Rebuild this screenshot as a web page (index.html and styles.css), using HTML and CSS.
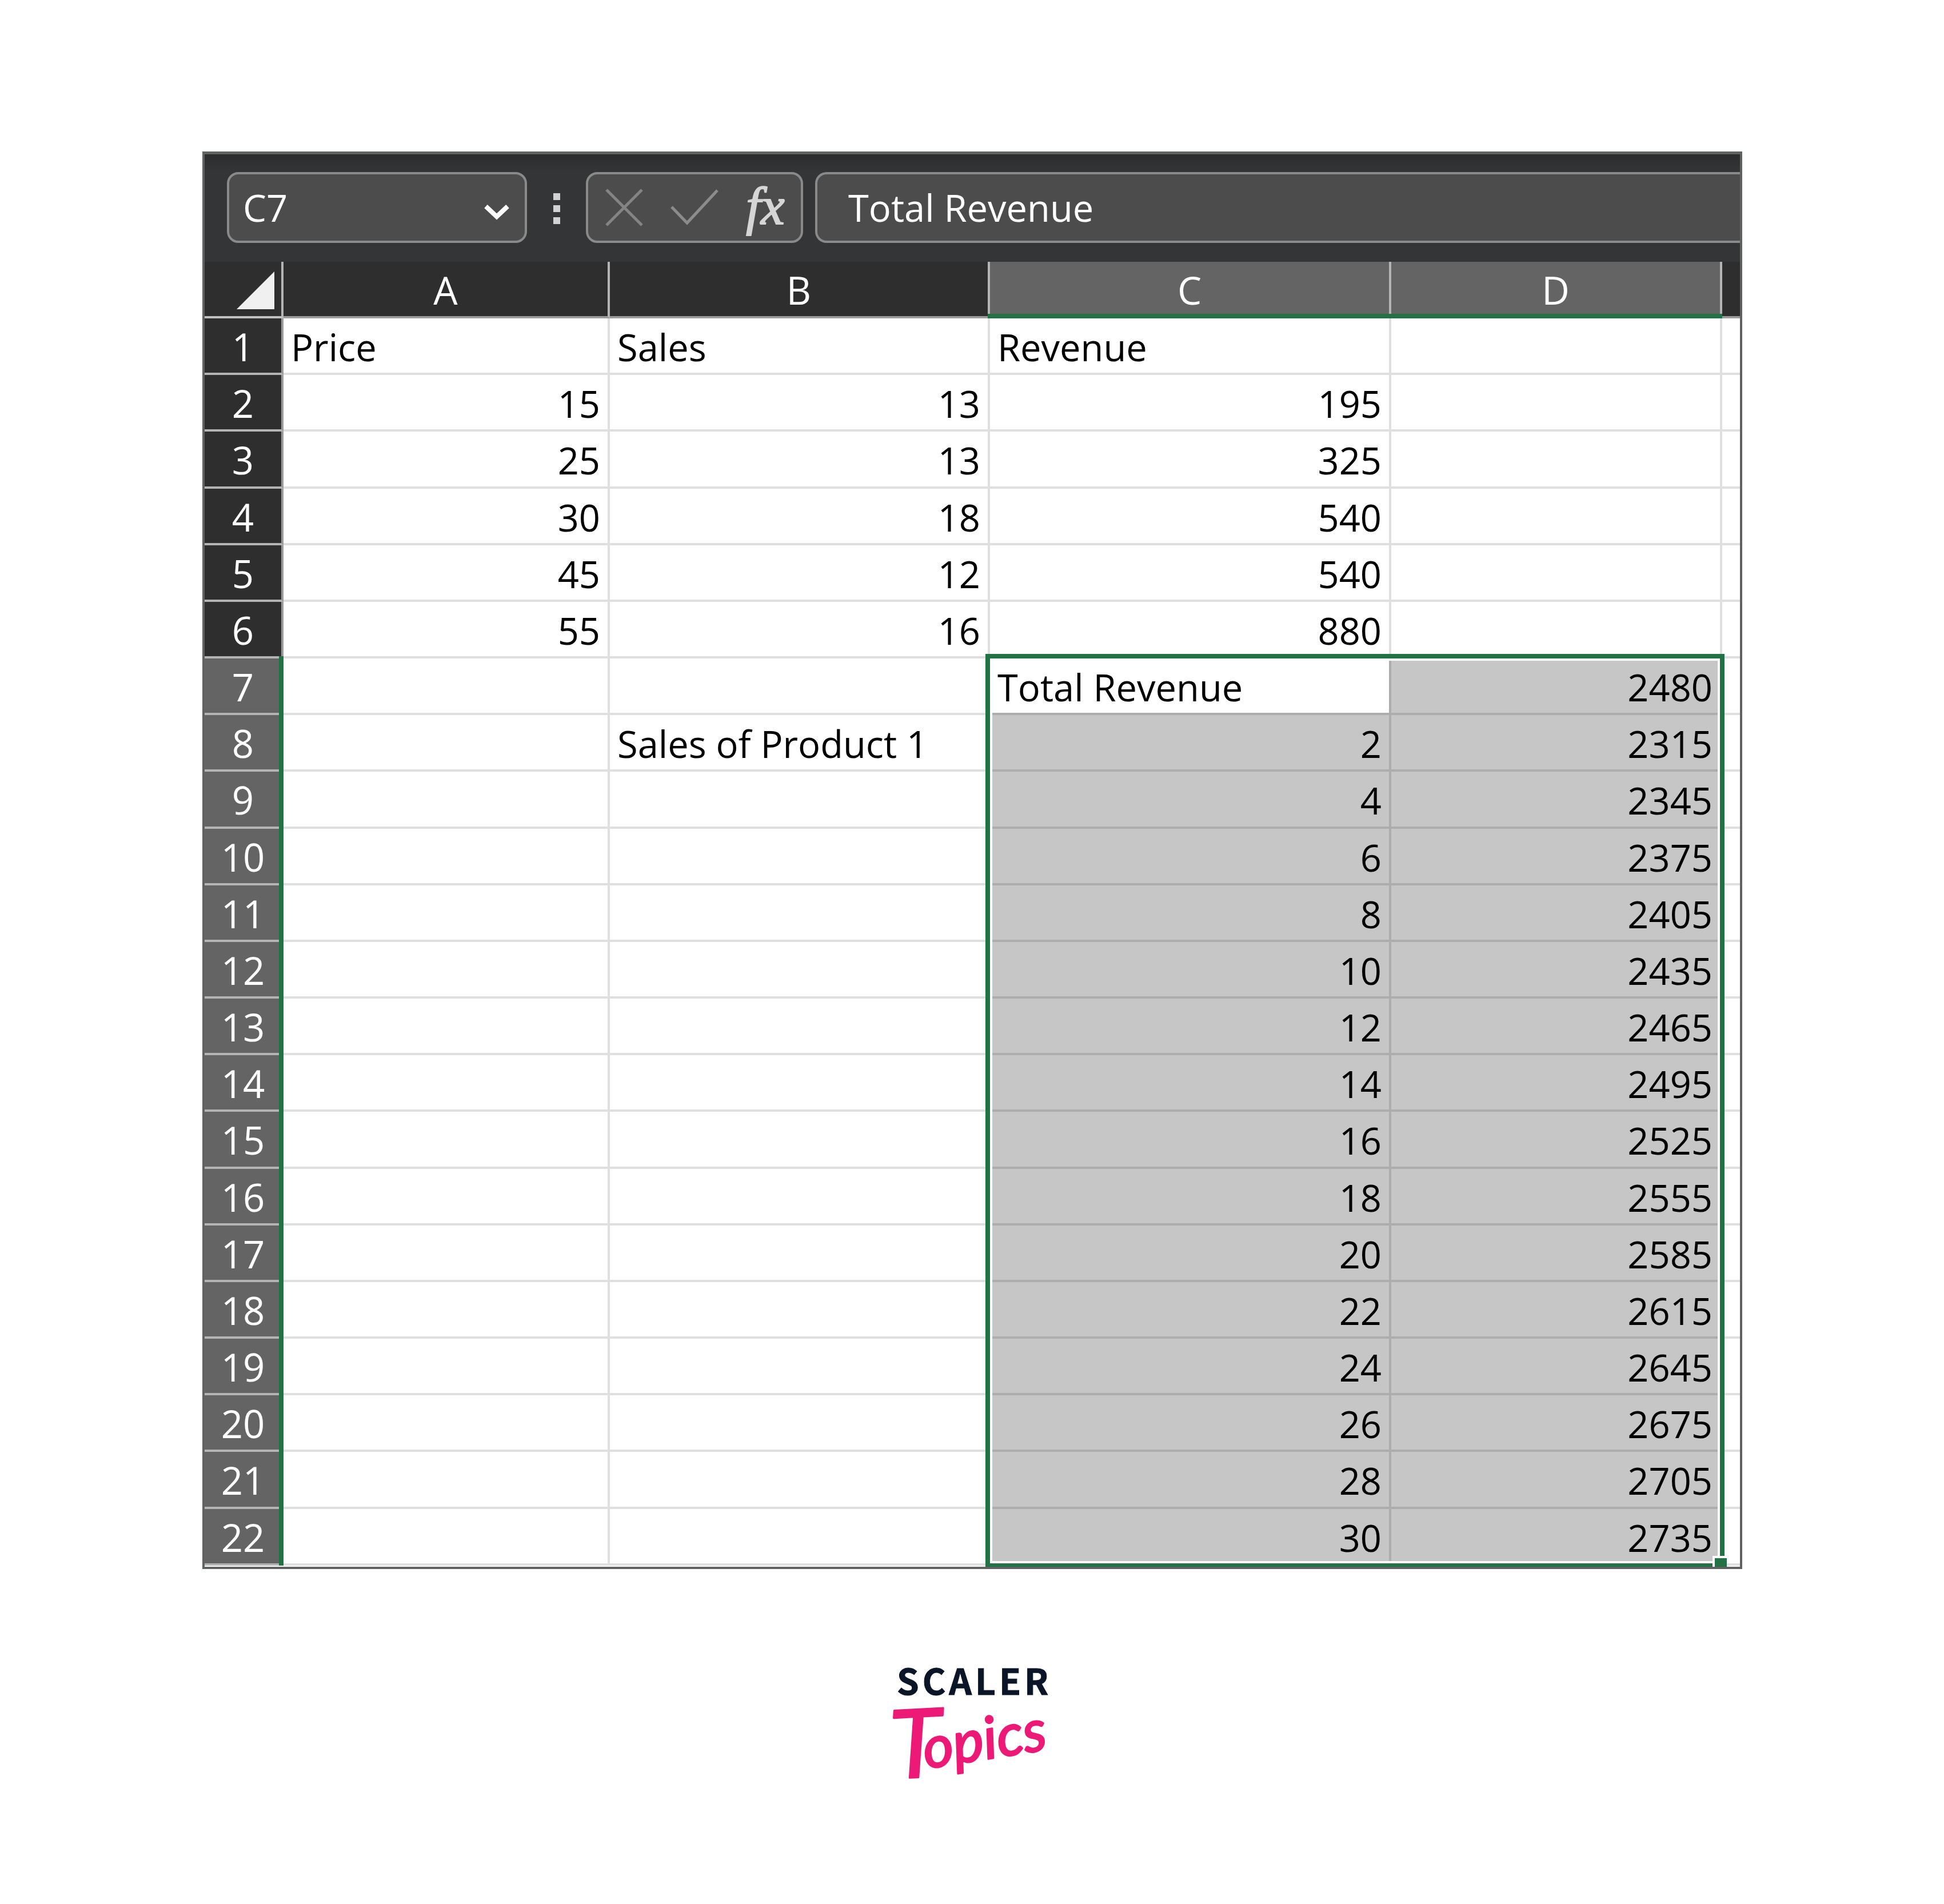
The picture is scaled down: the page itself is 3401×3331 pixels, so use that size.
FILE: index.html
```html
<!DOCTYPE html>
<html lang="en">
<head>
<meta charset="utf-8">
<title>Revenue data table</title>
<link rel="stylesheet" href="styles.css">
</head>
<body>
<main class="page">
  <section class="window">
    <div class="toolbar">
      <div class="field name-box">
        <input class="field-input" type="text" value="C7" aria-label="Name box">
        <button class="tool" type="button" aria-label="Show names">
          <svg width="46" height="28" viewBox="0 0 46 28"><path d="M4 4 23 22 42 4" fill="none" stroke="#fff" stroke-width="8"/></svg>
        </button>
      </div>
      <div class="dots" aria-hidden="true"><i></i><i></i><i></i></div>
      <div class="field actions">
        <button class="tool" type="button" aria-label="Cancel">
          <svg width="66" height="66" viewBox="0 0 66 66"><path d="M2 2 64 64M64 2 2 64" fill="none" stroke="#848484" stroke-width="5"/></svg>
        </button>
        <button class="tool" type="button" aria-label="Enter">
          <svg width="84" height="66" viewBox="0 0 84 66"><path d="M2 32 29 60 82 3" fill="none" stroke="#8c8c8c" stroke-width="5"/></svg>
        </button>
        <button class="tool fx" type="button" aria-label="Insert function">fx</button>
      </div>
      <div class="field formula">
        <input class="field-input" type="text" value="Total Revenue" aria-label="Formula bar">
      </div>
    </div>
    <div class="grid">
      <table class="sheet">
        <colgroup><col class="col-head"><col class="col-a"><col class="col-b"><col class="col-c"><col class="col-d"><col></colgroup>
        <thead>
          <tr>
            <th class="corner"><svg width="66" height="66" viewBox="0 0 66 66"><path d="M66 0V66H0Z" fill="#f0f0f0"/></svg></th>
            <th scope="col">A</th><th scope="col">B</th><th scope="col" class="on">C</th><th scope="col" class="on">D</th><th class="edge"></th>
          </tr>
        </thead>
        <tbody>
          <tr><th scope="row">1</th><td class="text">Price</td><td class="text">Sales</td><td class="text">Revenue</td><td></td><td></td></tr>
          <tr><th scope="row">2</th><td>15</td><td>13</td><td>195</td><td></td><td></td></tr>
          <tr><th scope="row">3</th><td>25</td><td>13</td><td>325</td><td></td><td></td></tr>
          <tr><th scope="row">4</th><td>30</td><td>18</td><td>540</td><td></td><td></td></tr>
          <tr><th scope="row">5</th><td>45</td><td>12</td><td>540</td><td></td><td></td></tr>
          <tr><th scope="row">6</th><td>55</td><td>16</td><td>880</td><td></td><td></td></tr>
          <tr><th scope="row" class="on">7</th><td></td><td></td><td class="text sel active">Total Revenue</td><td class="sel">2480</td><td></td></tr>
          <tr><th scope="row" class="on">8</th><td></td><td class="text">Sales of Product 1</td><td class="sel">2</td><td class="sel">2315</td><td></td></tr>
          <tr><th scope="row" class="on">9</th><td></td><td></td><td class="sel">4</td><td class="sel">2345</td><td></td></tr>
          <tr><th scope="row" class="on">10</th><td></td><td></td><td class="sel">6</td><td class="sel">2375</td><td></td></tr>
          <tr><th scope="row" class="on">11</th><td></td><td></td><td class="sel">8</td><td class="sel">2405</td><td></td></tr>
          <tr><th scope="row" class="on">12</th><td></td><td></td><td class="sel">10</td><td class="sel">2435</td><td></td></tr>
          <tr><th scope="row" class="on">13</th><td></td><td></td><td class="sel">12</td><td class="sel">2465</td><td></td></tr>
          <tr><th scope="row" class="on">14</th><td></td><td></td><td class="sel">14</td><td class="sel">2495</td><td></td></tr>
          <tr><th scope="row" class="on">15</th><td></td><td></td><td class="sel">16</td><td class="sel">2525</td><td></td></tr>
          <tr><th scope="row" class="on">16</th><td></td><td></td><td class="sel">18</td><td class="sel">2555</td><td></td></tr>
          <tr><th scope="row" class="on">17</th><td></td><td></td><td class="sel">20</td><td class="sel">2585</td><td></td></tr>
          <tr><th scope="row" class="on">18</th><td></td><td></td><td class="sel">22</td><td class="sel">2615</td><td></td></tr>
          <tr><th scope="row" class="on">19</th><td></td><td></td><td class="sel">24</td><td class="sel">2645</td><td></td></tr>
          <tr><th scope="row" class="on">20</th><td></td><td></td><td class="sel">26</td><td class="sel">2675</td><td></td></tr>
          <tr><th scope="row" class="on">21</th><td></td><td></td><td class="sel">28</td><td class="sel">2705</td><td></td></tr>
          <tr><th scope="row" class="on">22</th><td></td><td></td><td class="sel">30</td><td class="sel">2735</td><td></td></tr>
        </tbody>
      </table>
      <div class="selection"><span class="handle"></span></div>
    </div>
  </section>
  <svg class="logo" width="286" height="240" viewBox="0 0 286 240" role="img" aria-label="Scaler Topics">
    <text class="logo-name" x="11" y="53">SCALER</text>
    <text class="logo-script" transform="translate(2 200) rotate(-9)"><tspan class="logo-initial" rotate="6">T</tspan><tspan x="62" dy="-8">opics</tspan></text>
  </svg>
</main>
</body>
</html>
```
FILE: styles.css
```css
* { box-sizing: border-box; }

body {
  margin: 0;
  background: #fff;
  font-family: "Open Sans", "Noto Sans", sans-serif;
  font-size: 65px;
  color: #000;
}

.page {
  display: flex;
  flex-direction: column;
  align-items: center;
  padding: 265px 353px 160px 354px;
}

.window {
  width: 100%;
  border: 4px solid #606262;
  border-top-width: 5px;
  overflow: hidden;
}

.toolbar {
  display: flex;
  align-items: flex-start;
  height: 188px;
  padding: 31px 0 0 39px;
  background: linear-gradient(#2b2c2d, #333536 30px);
}

.field {
  display: flex;
  align-items: center;
  height: 124px;
  border: 4px solid #8a8a8a;
  border-radius: 20px;
  background: #4c4c4c;
}

.field-input {
  flex: 1;
  min-width: 0;
  height: 100%;
  padding: 0 0 0 24px;
  border: 0;
  background: transparent;
  color: #fff;
  font: inherit;
}

.tool {
  display: flex;
  padding: 0;
  border: 0;
  background: transparent;
}

.name-box { width: 525px; padding-right: 26px; }
.name-box .tool { padding-top: 16px; }

.dots {
  display: flex;
  flex-direction: column;
  gap: 9px;
  margin: 37px 45px 0 46px;
}

.dots i { width: 12px; height: 12px; background: #d2d2d2; }

.actions { width: 380px; padding-left: 30px; gap: 48px; }

.fx {
  padding-bottom: 6px;
  color: #d6d6d6;
  font: italic 94px/110px "Liberation Serif", serif;
  -webkit-text-stroke: 2px #d6d6d6;
}

.formula {
  flex: 1;
  margin-left: 21px;
  padding-left: 30px;
  border-right: 0;
  border-radius: 20px 0 0 20px;
}

.grid {
  position: relative;
  padding-bottom: 2px;
  overflow: hidden;
}

.sheet {
  width: 100%;
  height: 2281px;
  table-layout: fixed;
  border-collapse: separate;
  border-spacing: 0;
  line-height: 88px;
}

.col-head { width: 138px; }
.col-a { width: 571px; }
.col-b { width: 665px; }
.col-c { width: 702px; }
.col-d { width: 579px; }

th, td {
  border: solid #dfdfdf;
  border-width: 0 4px 4px 0;
  vertical-align: top;
  white-space: nowrap;
}

td { padding: 6px 13px 0; text-align: right; }
.text { text-align: left; }

th {
  position: relative;
  padding: 5px 0 0;
  border-color: #b4b4b4;
  background: #2e2e2e;
  color: #fff;
  font-size: 67px;
  font-weight: 400;
}

thead tr { height: 99px; }
thead th { border-bottom-color: #9a9a9a; }
tbody th { border-right-color: #9a9a9a; }
.on { background: #646464; }

.corner svg { display: block; margin: 12px 12px 0 auto; }
.corner { border-bottom-color: #c0c0c0; }

.on::after {
  content: "";
  position: absolute;
  background: #217346;
}

thead .on::after { left: -4px; right: -4px; bottom: -4px; height: 8px; }
tbody .on::after { top: -4px; bottom: -4px; right: -4px; width: 8px; }

th.edge, td:last-child { padding: 0; border-right: 0; }

.sel { border-color: #adadad; background: #c6c6c6; }
.active { background: #fff; }

/* Outline of the selected range, C7:D22 */
.selection {
  position: absolute;
  left: 1366px;
  top: 686px;
  bottom: 0;
  width: 1293px;
  border: 8px solid #217346;
  border-bottom-width: 6px;
  box-shadow: inset 0 0 0 4px #fff;
}

.handle {
  position: absolute;
  right: -12px;
  bottom: -6px;
  width: 25px;
  height: 19px;
  border: solid #fff;
  border-width: 4px 0 0 4px;
  background: #217346;
}

.logo { margin-top: 167px; overflow: visible; }

.logo-name {
  fill: #0a1528;
  font: 700 62px "Noto Sans CJK SC", sans-serif;
  letter-spacing: 6px;
  stroke: #0a1528;
  stroke-width: 1px;
}

.logo-script {
  fill: #ec1a76;
  font: italic 102px Lato, sans-serif;
  stroke: #ec1a76;
  stroke-width: 3px;
  stroke-linejoin: round;
}

.logo-initial { font-size: 166px; }
```
